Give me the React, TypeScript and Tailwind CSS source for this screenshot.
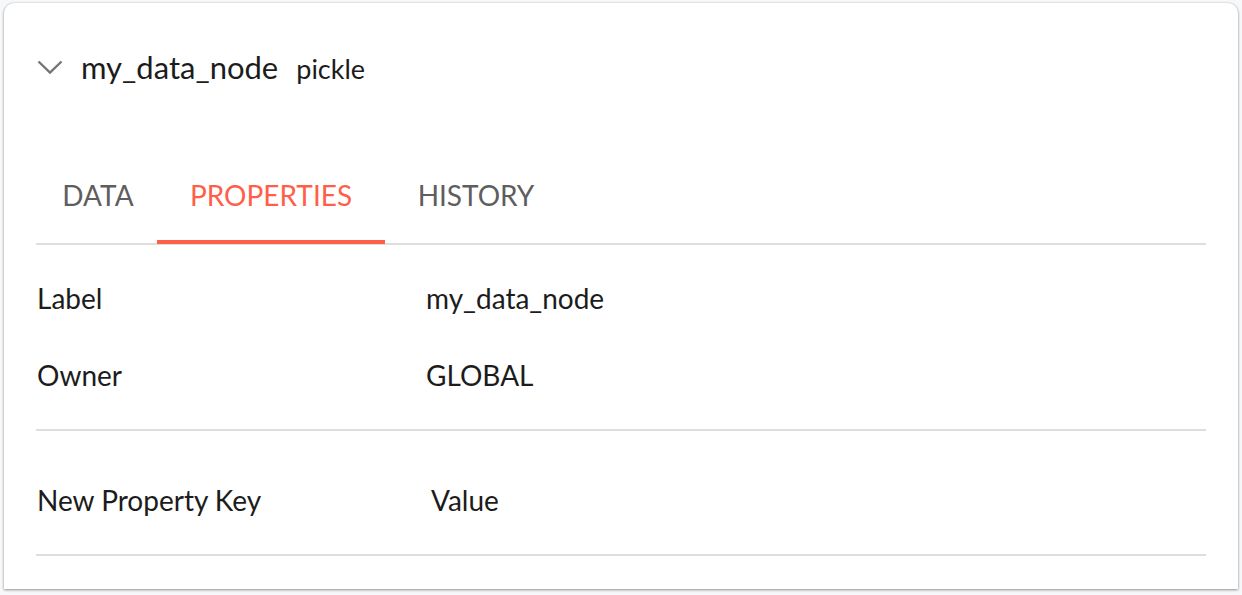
import React from "react";

function Chevron() {
  return (
    <svg width="26" height="16" viewBox="0 0 26 16" fill="none" className="text-[#757575]">
      <path d="M1.5 2.5L13 13.5L24.5 2.5" stroke="currentColor" strokeWidth="2.4" strokeLinecap="butt" strokeLinejoin="miter" />
    </svg>
  );
}

export default function App() {
  const font = { fontFamily: "Lato, 'Noto Sans', sans-serif" };
  return (
    <div className="w-[1242px] h-[595px] bg-[#f7f8f9] pt-[3px] pl-[4px] overflow-hidden" style={font}>
      <div className="w-[1234px] h-[586px] bg-white rounded-t-[10px] shadow-[0_1px_3px_rgba(0,0,0,0.4),0_0_2px_rgba(0,0,0,0.12)] px-[32px] flex flex-col">
        <div className="flex items-center h-[130px] pb-[5px]">
          <div className="ml-[1px] mr-[18px] flex items-center pt-[2px]"><Chevron /></div>
          <span className="text-[31px] text-[#1c1c1c] leading-none mr-[18px] mt-[3px]">my_data_node</span>
          <span className="text-[27px] text-[#1c1c1c] leading-none mt-[6px]">pickle</span>
        </div>
        <div className="flex border-b-2 border-[#dedede] h-[112px] items-stretch">
          <div className="w-[121px] flex items-center justify-center pl-[3px] text-[28px] text-[#5e5e5e] pt-[14px]">DATA</div>
          <div className="w-[228px] relative flex items-center justify-center text-[28px] text-[#ff5f4a] pt-[14px]">
            PROPERTIES
            <div className="absolute left-0 right-0 bottom-[-1px] h-[4px] bg-[#ff5f4a]" />
          </div>
          <div className="w-[182px] flex items-center justify-center text-[28px] text-[#5e5e5e] pt-[14px]">HISTORY</div>
        </div>
        <div className="flex flex-col pt-[14px] border-b-2 border-[#dedede] pb-[16px]">
          <div className="flex items-center h-[77px] text-[28px] text-[#1c1c1c]">
            <div className="w-[390px] pl-[1px]">Label</div>
            <div>my_data_node</div>
          </div>
          <div className="flex items-center h-[77px] text-[28px] text-[#1c1c1c]">
            <div className="w-[390px] pl-[1px]">Owner</div>
            <div>GLOBAL</div>
          </div>
        </div>
        <div className="flex items-center h-[125px] pt-[14px] text-[28px] text-[#1c1c1c] border-b-2 border-[#dedede]">
          <div className="w-[395px] pl-[1px]">New Property Key</div>
          <div>Value</div>
        </div>
      </div>
    </div>
  );
}
